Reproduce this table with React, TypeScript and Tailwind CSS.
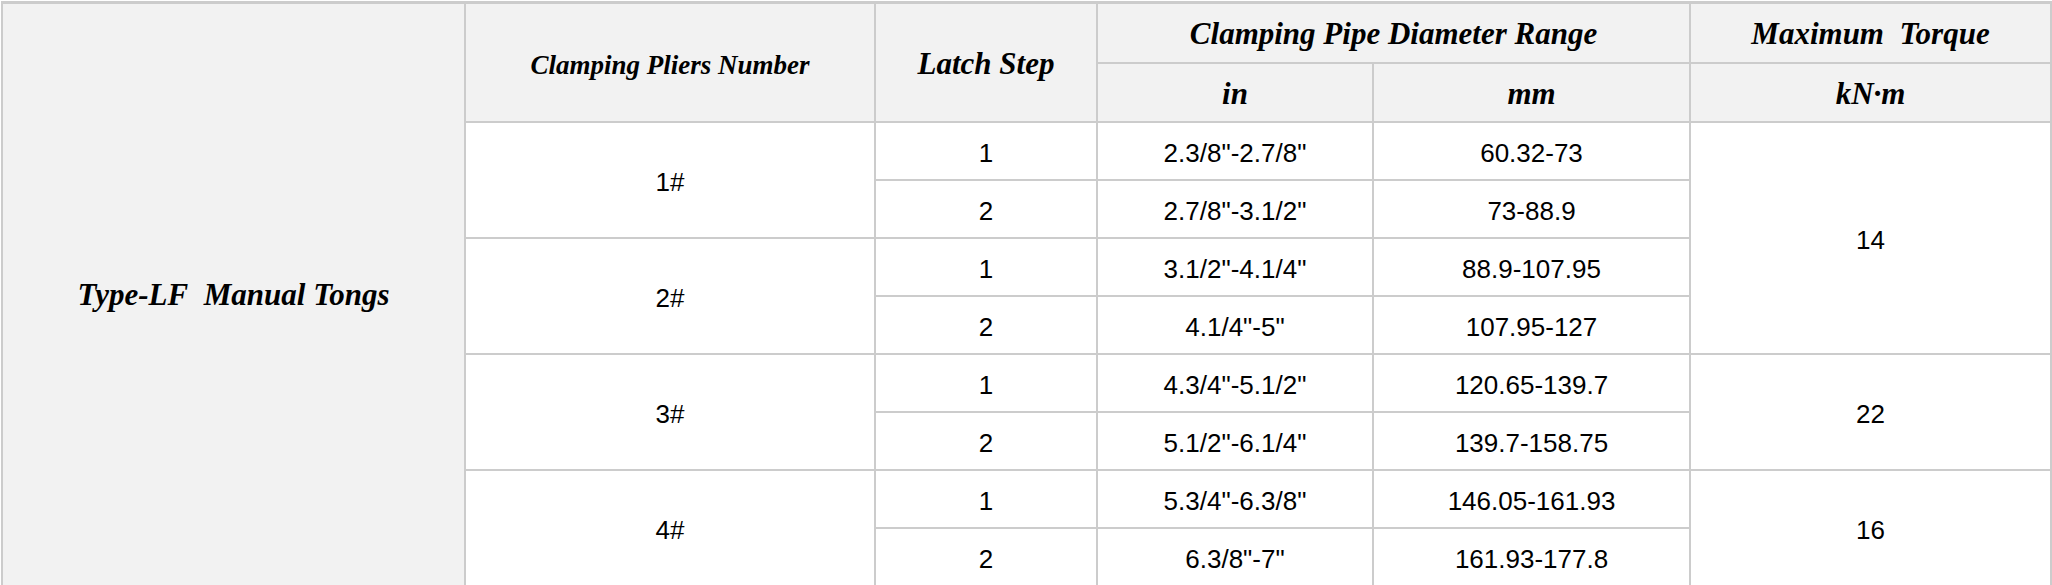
const head = "flex items-center justify-center bg-[#f2f2f2] font-['Liberation_Serif',serif] font-bold italic text-black leading-none";
const big = `${head} text-[31px]`;
const cell = "flex items-center justify-center bg-white pt-[3px] font-['Liberation_Sans',Arial,sans-serif] text-[26px] text-black leading-none";

interface IRow {
    step: string;
    inch: string;
    mm: string;
}

interface IGroup {
    no: string;
    rows: IRow[];
}

const groups: IGroup[] = [
    { no: "1#", rows: [{ step: "1", inch: '2.3/8"-2.7/8"', mm: "60.32-73" }, { step: "2", inch: '2.7/8"-3.1/2"', mm: "73-88.9" }] },
    { no: "2#", rows: [{ step: "1", inch: '3.1/2"-4.1/4"', mm: "88.9-107.95" }, { step: "2", inch: '4.1/4"-5"', mm: "107.95-127" }] },
    { no: "3#", rows: [{ step: "1", inch: '4.3/4"-5.1/2"', mm: "120.65-139.7" }, { step: "2", inch: '5.1/2"-6.1/4"', mm: "139.7-158.75" }] },
    { no: "4#", rows: [{ step: "1", inch: '5.3/4"-6.3/8"', mm: "146.05-161.93" }, { step: "2", inch: '6.3/8"-7"', mm: "161.93-177.8" }] },
];

const groupRow = ["row-[3/5]", "row-[5/7]", "row-[7/9]", "row-[9/11]"];
const singleRow = ["row-[3/4]", "row-[4/5]", "row-[5/6]", "row-[6/7]", "row-[7/8]", "row-[8/9]", "row-[9/10]", "row-[10/11]"];

export default function App() {
    return (
        <div className="h-[585px] w-[2052px] overflow-hidden bg-white">
            <div className="ml-[1px] mt-[1px] grid w-[2051px] grid-cols-[461px_408px_220px_274px_315px_359px] grid-rows-[58px_57px_repeat(8,56px)] gap-[2px] bg-[#cccccc] p-[2px] pt-[3px]">
                <div className={`${big} col-[1/2] row-[1/11]`}>Type-LF{"\u00a0"} Manual Tongs</div>

                <div className={`${head} col-[2/3] row-[1/3] pt-[6px] text-[27px]`}>Clamping Pliers Number</div>
                <div className={`${big} col-[3/4] row-[1/3] pt-[2px]`}>Latch Step</div>
                <div className={`${big} col-[4/6] row-[1/2]`}>Clamping Pipe Diameter Range</div>
                <div className={`${big} col-[6/7] row-[1/2]`}>Maximum{"\u00a0"} Torque</div>
                <div className={`${big} col-[4/5] row-[2/3] pt-[2px]`}>in</div>
                <div className={`${big} col-[5/6] row-[2/3] pt-[2px]`}>mm</div>
                <div className={`${big} col-[6/7] row-[2/3] pt-[2px]`}>kN·m</div>

                {groups.map((g, gi) => (
                    <div key={g.no} className={`${cell} col-[2/3] ${groupRow[gi]}`}>{g.no}</div>
                ))}

                {groups.flatMap((g, gi) =>
                    g.rows.map((r, ri) => {
                        const row = singleRow[gi * 2 + ri];
                        return [
                            <div key={`s${gi}${ri}`} className={`${cell} col-[3/4] ${row}`}>{r.step}</div>,
                            <div key={`i${gi}${ri}`} className={`${cell} col-[4/5] ${row}`}>{r.inch}</div>,
                            <div key={`m${gi}${ri}`} className={`${cell} col-[5/6] ${row}`}>{r.mm}</div>,
                        ];
                    })
                )}

                <div className={`${cell} col-[6/7] row-[3/7]`}>14</div>
                <div className={`${cell} col-[6/7] row-[7/9]`}>22</div>
                <div className={`${cell} col-[6/7] row-[9/11]`}>16</div>
            </div>
        </div>
    );
}
